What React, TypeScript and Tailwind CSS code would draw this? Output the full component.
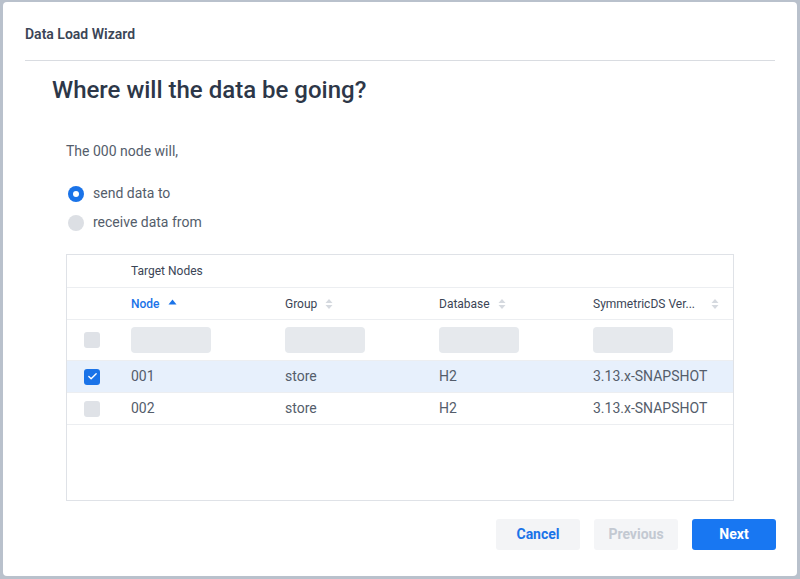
import { Check } from "lucide-react";

const rows = [
  { node: "001", group: "store", db: "H2", version: "3.13.x-SNAPSHOT", checked: true },
  { node: "002", group: "store", db: "H2", version: "3.13.x-SNAPSHOT", checked: false },
];

const cols = "grid grid-cols-[49px_154px_154px_154px_1fr]";

function SortIcon({ active }: { active?: boolean }) {
  if (active) {
    return (
      <svg width="9" height="6" viewBox="0 0 9 6" className="ml-2 mb-[3px]">
        <path d="M0.5 5.5 L4.5 0.5 L8.5 5.5 Z" fill="#1a73e8" />
      </svg>
    );
  }
  return (
    <svg width="8" height="12" viewBox="0 0 8 12" className="ml-2">
      <path d="M0.5 5 L4 1 L7.5 5 Z" fill="#d5d9df" />
      <path d="M0.5 7 L4 11 L7.5 7 Z" fill="#d5d9df" />
    </svg>
  );
}

function Box({ checked }: { checked?: boolean }) {
  return checked ? (
    <span className="flex h-4 w-4 items-center justify-center rounded-[3px] bg-[#1a73e8]">
      <Check size={11} strokeWidth={3} color="white" />
    </span>
  ) : (
    <span className="block h-4 w-4 rounded-[3px] bg-[#dfe2e7]" />
  );
}

export default function App() {
  return (
    <div className="h-[579px] w-[800px] overflow-hidden bg-[#b9c1cc] pl-[3px] pt-[2px] font-['Roboto',sans-serif]">
      <div className="flex h-[574px] w-[794px] flex-col rounded-[4px] bg-white pl-[22px] pr-[21px]">
        <div className="mr-[1px] flex h-[59px] items-center border-b border-[#d9dce1] pt-[6px]">
          <h1 className="text-[14px] font-semibold text-[#3b4556]">Data Load Wizard</h1>
        </div>

        <h2 className="ml-[27px] mt-[11px] text-[24px] font-medium text-[#2d3748]">
          Where will the data be going?
        </h2>

        <div className="ml-[41px] mt-[33px] w-[668px]">
          <p className="text-[14px] text-[#545d6b]">The 000 node will,</p>

          <div className="mt-[21px] flex flex-col gap-[8px] text-[14px] text-[#545d6b]">
            <label className="flex items-center gap-[9px] pl-[2px]">
              <span className="flex h-4 w-4 items-center justify-center rounded-full bg-[#1a73e8]">
                <span className="h-[6px] w-[6px] rounded-full bg-white" />
              </span>
              send data to
            </label>
            <label className="flex items-center gap-[9px] pl-[2px]">
              <span className="h-4 w-4 rounded-full bg-[#dcdfe4]" />
              receive data from
            </label>
          </div>

          <div className="mt-[21px] h-[247px] border border-[#dfe2e7]">
            <div className={`${cols} h-[33px] items-center border-b border-[#eceef1] text-[12px] text-[#3b4556]`}>
              <span />
              <span className="pl-[15px]">Target Nodes</span>
            </div>
            <div className={`${cols} h-[32px] items-center border-b border-[#eceef1] text-[12px] text-[#3b4556]`}>
              <span />
              <span className="flex items-center pl-[15px] font-medium text-[#1a73e8]">
                Node
                <SortIcon active />
              </span>
              <span className="flex items-center pl-[15px]">
                Group
                <SortIcon />
              </span>
              <span className="flex items-center pl-[15px]">
                Database
                <SortIcon />
              </span>
              <span className="flex items-center pl-[15px]">
                SymmetricDS Ver...
                <span className="ml-auto mr-[14px] flex">
                  <SortIcon />
                </span>
              </span>
            </div>
            <div className={`${cols} h-[41px] items-center border-b border-[#eceef1]`}>
              <span className="pl-[17px]">
                <Box />
              </span>
              {[0, 1, 2, 3].map((i) => (
                <span key={i} className="pl-[15px]">
                  <span className="block h-[26px] w-[80px] rounded-[4px] bg-[#e6e9ed]" />
                </span>
              ))}
            </div>
            {rows.map((r) => (
              <div
                key={r.node}
                className={`${cols} h-[32px] items-center border-b border-[#eceef1] text-[14px] text-[#545d6b] ${
                  r.checked ? "bg-[#e7f0fc]" : ""
                }`}
              >
                <span className="pl-[17px]">
                  <Box checked={r.checked} />
                </span>
                <span className="pl-[15px]">{r.node}</span>
                <span className="pl-[15px]">{r.group}</span>
                <span className="pl-[15px]">{r.db}</span>
                <span className="pl-[15px]">{r.version}</span>
              </div>
            ))}
          </div>
        </div>

        <div className="mt-[18px] flex justify-end gap-[14px] text-[14px] font-bold">
          <button className="h-[31px] w-[84px] rounded-[3px] bg-[#f3f4f6] text-[#1a73e8]">Cancel</button>
          <button className="h-[31px] w-[84px] rounded-[3px] bg-[#f4f5f7] text-[#c3c9d2]">Previous</button>
          <button className="h-[31px] w-[84px] rounded-[3px] bg-[#1877f2] text-white">Next</button>
        </div>
      </div>
    </div>
  );
}
